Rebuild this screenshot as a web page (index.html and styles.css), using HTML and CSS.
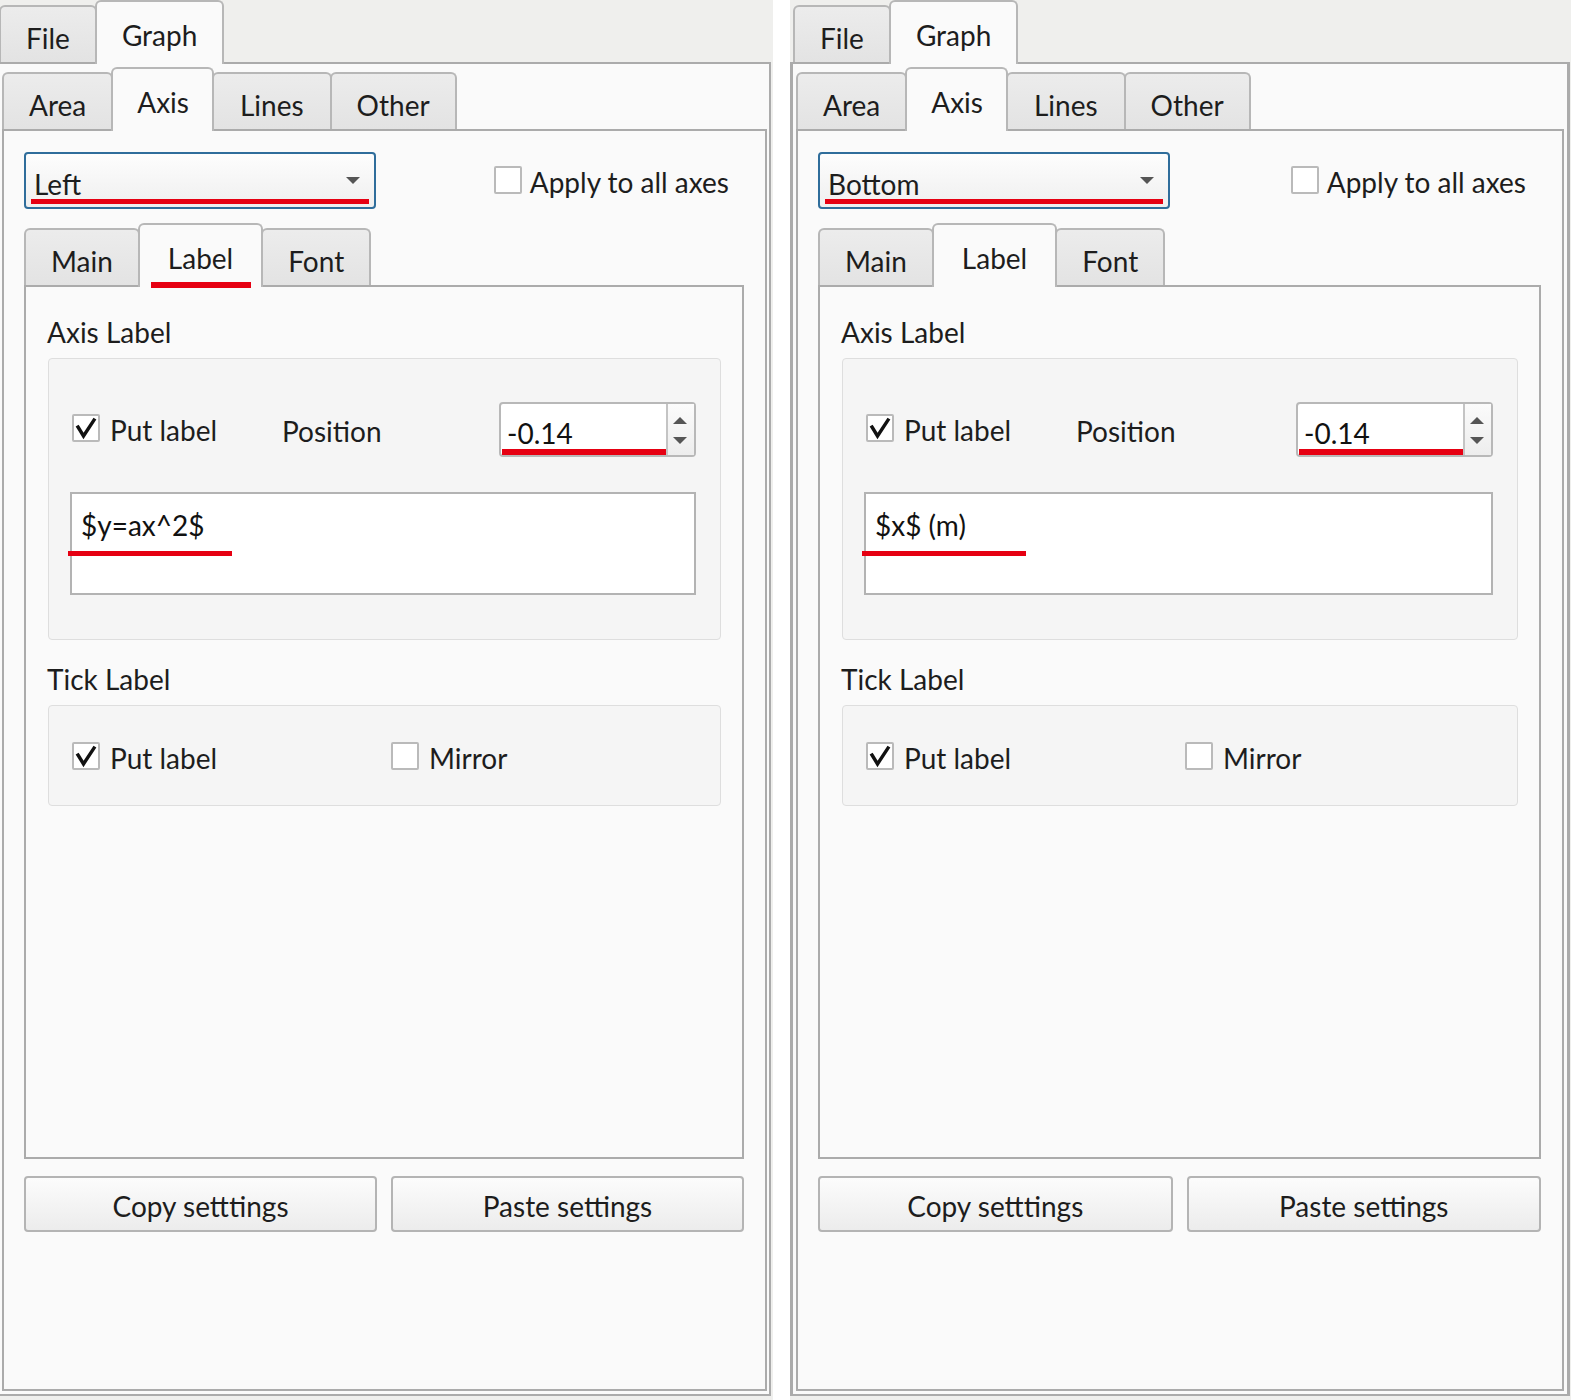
FILE: index.html
```html
<!DOCTYPE html>
<html lang="en">
<head>
<meta charset="utf-8">
<title>Axis settings</title>
<link rel="stylesheet" href="styles.css">
</head>
<body>
<div class="screen">
  <div class="panel panel--left">
    <div class="tabbar tabbar--top">
      <div class="tab">File</div>
      <div class="tab tab--active">Graph</div>
    </div>
    <div class="pane pane--graph">
      <div class="tabbar tabbar--axis">
        <div class="tab">Area</div>
        <div class="tab tab--active tab--narrow">Axis</div>
        <div class="tab tab--lines">Lines</div>
        <div class="tab">Other</div>
      </div>
      <div class="pane pane--axis">
        <div class="axis-row">
          <div class="combo">
            <span class="combo__text">Left</span>
            <span class="combo__arrow"></span>
            <span class="mark mark--combo"></span>
          </div>
          <div class="check check--apply"><span class="check__box"></span><span>Apply to all axes</span></div>
        </div>
        <div class="tabbar tabbar--sub">
          <div class="tab">Main</div>
          <div class="tab tab--active tab--wide">Label<span class="mark mark--tab"></span></div>
          <div class="tab">Font</div>
        </div>
        <div class="pane pane--label">
          <div class="section-title">Axis Label</div>
          <div class="group group--axis">
            <div class="group__row">
              <div class="check check--put"><span class="check__box"><svg class="check__tick" viewBox="0 0 28 28"><path d="M6 13 L11.5 22 L22 6"/></svg></span><span>Put label</span></div>
              <span class="field-label">Position</span>
              <div class="spin">
                <div class="spin__field">-0.14<span class="mark mark--spin"></span></div>
                <div class="spin__buttons"><span class="spin__up"></span><span class="spin__down"></span></div>
              </div>
            </div>
            <div class="textedit">$y=ax^2$<span class="mark mark--edit"></span></div>
          </div>
          <div class="section-title section-title--tick">Tick Label</div>
          <div class="group group--tick">
            <div class="check check--put"><span class="check__box"><svg class="check__tick" viewBox="0 0 28 28"><path d="M6 13 L11.5 22 L22 6"/></svg></span><span>Put label</span></div>
            <div class="check"><span class="check__box"></span><span>Mirror</span></div>
          </div>
        </div>
        <div class="buttons">
          <div class="button">Copy setttings</div>
          <div class="button">Paste settings</div>
        </div>
      </div>
    </div>
  </div>

  <div class="panel panel--right">
    <div class="tabbar tabbar--top">
      <div class="tab">File</div>
      <div class="tab tab--active">Graph</div>
    </div>
    <div class="pane pane--graph">
      <div class="tabbar tabbar--axis">
        <div class="tab">Area</div>
        <div class="tab tab--active tab--narrow">Axis</div>
        <div class="tab tab--lines">Lines</div>
        <div class="tab">Other</div>
      </div>
      <div class="pane pane--axis">
        <div class="axis-row">
          <div class="combo">
            <span class="combo__text">Bottom</span>
            <span class="combo__arrow"></span>
            <span class="mark mark--combo"></span>
          </div>
          <div class="check check--apply"><span class="check__box"></span><span>Apply to all axes</span></div>
        </div>
        <div class="tabbar tabbar--sub">
          <div class="tab">Main</div>
          <div class="tab tab--active tab--wide">Label</div>
          <div class="tab">Font</div>
        </div>
        <div class="pane pane--label">
          <div class="section-title">Axis Label</div>
          <div class="group group--axis">
            <div class="group__row">
              <div class="check check--put"><span class="check__box"><svg class="check__tick" viewBox="0 0 28 28"><path d="M6 13 L11.5 22 L22 6"/></svg></span><span>Put label</span></div>
              <span class="field-label">Position</span>
              <div class="spin">
                <div class="spin__field">-0.14<span class="mark mark--spin"></span></div>
                <div class="spin__buttons"><span class="spin__up"></span><span class="spin__down"></span></div>
              </div>
            </div>
            <div class="textedit">$x$ (m)<span class="mark mark--edit"></span></div>
          </div>
          <div class="section-title section-title--tick">Tick Label</div>
          <div class="group group--tick">
            <div class="check check--put"><span class="check__box"><svg class="check__tick" viewBox="0 0 28 28"><path d="M6 13 L11.5 22 L22 6"/></svg></span><span>Put label</span></div>
            <div class="check"><span class="check__box"></span><span>Mirror</span></div>
          </div>
        </div>
        <div class="buttons">
          <div class="button">Copy setttings</div>
          <div class="button">Paste settings</div>
        </div>
      </div>
    </div>
  </div>
</div>
</body>
</html>
```

FILE: styles.css
```css
* { box-sizing: border-box; }

html, body {
  margin: 0;
  padding: 0;
  background: #ffffff;
  overflow: hidden;
}

body {
  font-family: Lato, "Noto Sans", sans-serif;
  font-size: 28px;
  line-height: 34px;
  color: #1d1d1d;
}

.screen {
  display: flex;
  gap: 17px;
  margin-left: -4px;
  height: 1400px;
}

.panel {
  height: 1400px;
  background: #efefed;
  display: flex;
  flex-direction: column;
  padding: 0 1px 4px 0;
}

.panel--left { width: 777px; padding-right: 2px; }
.panel--right { width: 781px; }

/* ---------- tabs ---------- */
.tabbar {
  display: flex;
  align-items: flex-end;
  flex: none;
  position: relative;
  z-index: 1;
}

.tabbar--top { height: 62px; padding-left: 3px; }
.tabbar--axis { height: 65px; }
.tabbar--sub { height: 62px; margin-top: 14px; }

.tab {
  position: relative;
  height: 57px;
  padding: 6px 25px 0 25px;
  margin-right: -2px;
  border: 2px solid #b7b7b7;
  border-bottom: none;
  border-radius: 6px 6px 0 0;
  background: linear-gradient(#ececec, #e3e3e3);
  display: flex;
  align-items: center;
  color: #1d1d1d;
}

.tab--active {
  height: 64px;
  margin-bottom: -2px;
  background: #fafafa;
  padding-top: 3px;
  padding-bottom: 0;
  z-index: 2;
}

.tab--narrow { padding-left: 24px; padding-right: 23px; }
.tab--lines { padding-left: 26px; padding-right: 26px; }
.tab--wide { padding-left: 28px; padding-right: 28px; }

/* ---------- panes ---------- */
.pane--graph {
  flex: 1;
  display: flex;
  flex-direction: column;
  background: #fafafa;
  border: 2px solid #ababab;
  border-left-width: 3px;
  border-right-width: 3px;
  padding: 0 3px 3px 3px;
}

.panel--left .pane--graph {
  border-right-width: 2px;
  padding-right: 2px;
}

.pane--axis {
  flex: 1;
  display: flex;
  flex-direction: column;
  border: 2px solid #ababab;
  background: #fafafa;
  padding: 21px 21px 157px 20px;
}

.axis-row {
  display: flex;
  align-items: center;
  height: 57px;
  flex: none;
}

.combo {
  position: relative;
  width: 352px;
  height: 57px;
  border: 2px solid #2f6d9b;
  border-radius: 4px;
  background: linear-gradient(#fdfdfd, #efefef);
  padding: 6px 0 0 8px;
  display: flex;
  align-items: center;
}

.combo__arrow {
  position: absolute;
  right: 14px;
  top: 23px;
  width: 0;
  height: 0;
  border-left: 7px solid transparent;
  border-right: 7px solid transparent;
  border-top: 7px solid #555;
}

.check {
  display: flex;
  align-items: center;
  gap: 10px;
}

.check--apply {
  margin-left: auto;
  margin-right: 15px;
  padding-top: 2px;
  gap: 8px;
}

.check__box {
  width: 28px;
  height: 28px;
  flex: none;
  border: 2px solid #bababa;
  border-radius: 2px;
  background: #ffffff;
  position: relative;
  margin-top: -4px;
}

.check__tick {
  position: absolute;
  left: -2px;
  top: -2px;
  width: 28px;
  height: 28px;
}

.check__tick path {
  fill: none;
  stroke: #111;
  stroke-width: 3.4;
  stroke-linecap: square;
  stroke-linejoin: miter;
}

.pane--label {
  flex: 1;
  border: 2px solid #ababab;
  background: #fafafa;
  padding: 28px 21px 0 20px;
}

.section-title {
  padding-left: 1px;
  height: 34px;
}

.section-title--tick {
  margin-top: 22px;
}

.group {
  margin: 9px 0 0 2px;
  border: 1px solid #dedede;
  border-radius: 4px;
  background: #f5f5f5;
}

.group--axis {
  height: 282px;
  padding: 43px 24px 0 22px;
}

.group__row {
  display: flex;
  align-items: center;
  height: 55px;
}

.check--put {
  width: 211px;
  padding-left: 1px;
}

.group--tick .check--put { width: 320px; }

.field-label {
  padding-top: 2px;
}

.spin {
  margin-left: auto;
  width: 197px;
  height: 55px;
  display: flex;
  border: 2px solid #b8b8b8;
  border-radius: 4px;
  background: #ffffff;
}

.spin__field {
  position: relative;
  flex: 1;
  padding: 12px 0 0 6px;
  color: #111;
}

.spin__buttons {
  width: 28px;
  flex: none;
  border-left: 2px solid #c4c4c4;
  background: linear-gradient(#fbfbfb, #ededed);
  position: relative;
}

.spin__up, .spin__down {
  position: absolute;
  left: 5px;
  width: 0;
  height: 0;
  border-left: 7px solid transparent;
  border-right: 7px solid transparent;
}

.spin__up { top: 13px; border-bottom: 7px solid #555; }
.spin__down { top: 33px; border-top: 7px solid #555; }

.textedit {
  position: relative;
  margin-top: 35px;
  margin-left: -1px;
  height: 103px;
  border: 2px solid #b3b3b3;
  background: #ffffff;
  padding: 14px 0 0 9px;
  color: #111;
}

.group--tick {
  height: 101px;
  display: flex;
  align-items: center;
  padding: 4px 22px 0 22px;
}

.buttons {
  display: flex;
  gap: 14px;
  margin-top: 17px;
  flex: none;
}

.button {
  flex: 1;
  height: 56px;
  border: 2px solid #b4b4b4;
  border-radius: 4px;
  background: linear-gradient(#fcfcfc, #ececec);
  display: flex;
  align-items: center;
  justify-content: center;
  padding-top: 3px;
}

/* ---------- red annotation marks ---------- */
.mark {
  position: absolute;
  background: #e60012;
  z-index: 3;
}

.mark--combo { left: 5px; top: 45px; width: 338px; height: 5px; }
.mark--tab { left: 11px; top: 57px; width: 100px; height: 6px; }
.mark--spin { left: 1px; top: 45px; width: 164px; height: 6px; }
.mark--edit { left: -4px; top: 57px; width: 164px; height: 5px; }
```
